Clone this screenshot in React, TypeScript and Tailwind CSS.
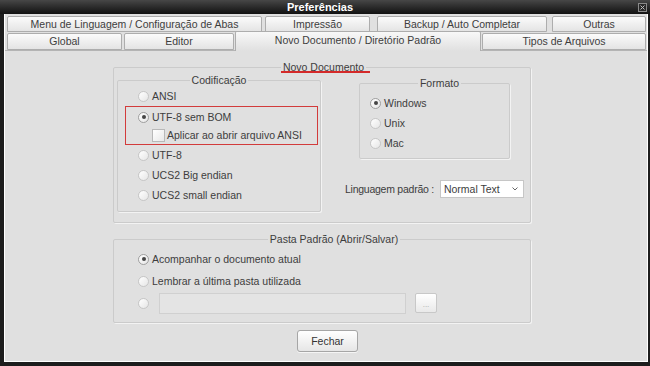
import React from 'react';

function Radio({ checked = false }: { checked?: boolean }) {
  return (
    <span
      className={`w-[11px] h-[11px] shrink-0 rounded-full border bg-gradient-to-br from-white to-[#e6e6e6] flex items-center justify-center ${
        checked ? 'border-[#9f9f9f]' : 'border-[#c6c6c6]'
      }`}
    >
      {checked && <span className="w-[4px] h-[4px] rounded-full bg-[#454545]" />}
    </span>
  );
}

function RadioRow({ label, checked = false, className = '' }: { label: string; checked?: boolean; className?: string }) {
  return (
    <div className={`h-[20px] flex items-center gap-[3px] ${className}`}>
      <Radio checked={checked} />
      <span>{label}</span>
    </div>
  );
}

function Tab({ label, className = '' }: { label: string; className?: string }) {
  return (
    <div
      className={`h-full flex items-center justify-center border border-[#adadad] rounded-t-[2px] bg-gradient-to-b from-[#fbfbfb] to-[#e4e4e4] ${className}`}
    >
      {label}
    </div>
  );
}

export default function App() {
  return (
    <div className="w-[650px] h-[366px] flex flex-col bg-[#1d1d1d] font-['Liberation_Sans',Arial,sans-serif] text-[10.5px] leading-[13px] text-[#3d3d3d]">
      {/* barra de título */}
      <div className="h-[14px] shrink-0 relative flex items-center justify-center pr-[10px] bg-gradient-to-b from-[#474747] to-[#121212]">
        <span className="text-white font-bold text-[11px]">Preferências</span>
        <span className="absolute right-[3px] top-[3px] w-[9px] h-[9px] border border-[#8a8a8a] bg-[#2a2a2a] flex items-center justify-center">
          <svg width="5" height="5" viewBox="0 0 5 5">
            <path d="M0.5 0.5 L4.5 4.5 M4.5 0.5 L0.5 4.5" stroke="#bdbdbd" strokeWidth="1" />
          </svg>
        </span>
      </div>

      <div className="flex-1 ml-[4px] mr-[2px] mb-[4px] flex flex-col bg-[#e0e0e0] border-l border-r border-b border-white pt-[2px]">
        {/* abas */}
        <div className="h-[16px] flex pl-[2px]">
          <Tab label="Menu de Linguagem / Configuração de Abas" className="w-[255px]" />
          <Tab label="Impressão" className="w-[105px] ml-[3px]" />
          <Tab label="Backup / Auto Completar" className="w-[170px] ml-[7px]" />
          <Tab label="Outras" className="w-[94px] ml-[5px]" />
        </div>
        <div className="h-[17px] mt-[1px] flex items-end pl-[2px]">
          <Tab label="Global" className="w-[115px]" />
          <Tab label="Editor" className="w-[110px] ml-[2px]" />
          <div className="relative z-10 w-[246px] h-[20px] -mb-[1px] ml-[1px] flex items-center justify-center pb-[2px] border border-b-0 border-[#adadad] rounded-t-[2px] bg-gradient-to-b from-[#f8f8f8] to-[#e0e0e0]">
            Novo Documento / Diretório Padrão
          </div>
          <Tab label="Tipos de Arquivos" className="w-[164px] ml-[1px]" />
        </div>

        {/* conteúdo */}
        <div className="flex-1 flex flex-col border-t border-[#b4b4b4] pt-[10px]">
          <fieldset className="ml-[108px] w-[418px] border border-[#cbcbcb] rounded-[2px] shadow-[1px_1px_0_#f3f3f3] pl-[3px] pb-[10px]">
            <legend className="relative mx-auto px-[2px] h-[13px]">
              Novo Documento
              <span className="absolute left-0 -right-[4px] bottom-[1px] h-[2px] bg-[#d42a2a]" />
            </legend>
            <div className="flex items-start">
              <fieldset className="w-[204px] border border-[#cbcbcb] rounded-[2px] shadow-[1px_1px_0_#f3f3f3] pb-[6px]">
                <legend className="mx-auto px-[2px] h-[13px]">Codificação</legend>
                <RadioRow label="ANSI" className="pl-[20px] -mt-[1px]" />
                <div className="ml-[7px] w-[193px] border border-[#d23b3b]">
                  <RadioRow label="UTF-8 sem BOM" checked className="pl-[12px] h-[19px]" />
                  <div className="h-[17px] flex items-center gap-[2px] pl-[26px]">
                    <span className="w-[13px] h-[13px] border border-[#b8b8b8] bg-gradient-to-br from-white to-[#e8e8e8]" />
                    <span>Aplicar ao abrir arquivo ANSI</span>
                  </div>
                </div>
                <RadioRow label="UTF-8" className="pl-[20px]" />
                <RadioRow label="UCS2 Big endian" className="pl-[20px]" />
                <RadioRow label="UCS2 small endian" className="pl-[20px]" />
              </fieldset>

              <div className="ml-[24px] flex flex-col">
                <fieldset className="ml-[14px] mt-[3px] w-[151px] border border-[#cbcbcb] rounded-[2px] shadow-[1px_1px_0_#f3f3f3] pl-[10px] pt-[3px] pb-[5px]">
                  <legend className="mx-auto px-[2px] h-[13px]">Formato</legend>
                  <RadioRow label="Windows" checked />
                  <RadioRow label="Unix" />
                  <RadioRow label="Mac" />
                </fieldset>
                <div className="mt-[21px] h-[18px] flex items-center">
                  <span className="tracking-[-0.25px]">Linguagem padrão :</span>
                  <div className="ml-[6px] w-[84px] h-[18px] flex items-center justify-between pl-[3px] pr-[5px] bg-white border border-[#c6c6c6]">
                    <span>Normal Text</span>
                    <svg width="6" height="4" viewBox="0 0 6 4">
                      <path d="M0.5 0.5 L3 3 L5.5 0.5" fill="none" stroke="#666" strokeWidth="1" />
                    </svg>
                  </div>
                </div>
              </div>
            </div>
          </fieldset>

          <fieldset className="ml-[108px] mt-[10px] w-[418px] border border-[#cbcbcb] rounded-[2px] shadow-[1px_1px_0_#f3f3f3] pl-[24px] pt-[2px] pb-[8px]">
            <legend className="mx-auto px-[2px] h-[13px]">Pasta Padrão (Abrir/Salvar)</legend>
            <RadioRow label="Acompanhar o documento atual" checked className="h-[22px]" />
            <RadioRow label="Lembrar a última pasta utilizada" className="h-[22px]" />
            <div className="h-[22px] flex items-center">
              <Radio />
              <div className="ml-[10px] w-[247px] h-[21px] bg-[#e4e4e4] border border-[#d0d0d0]" />
              <div className="ml-[9px] w-[22px] h-[20px] flex items-end justify-center pb-[3px] rounded-[2px] border border-[#c8c8c8] bg-gradient-to-b from-white to-[#e9e9e9] text-[#a8a8a8] text-[8px] leading-[8px]">
                ...
              </div>
            </div>
          </fieldset>

          <button className="self-center mt-[7px] ml-[3px] w-[61px] h-[22px] flex items-center justify-center rounded-[3px] border border-[#a6a6a6] bg-gradient-to-b from-white to-[#e6e6e6] shadow-[0_1px_0_#f5f5f5] text-[#333]">
            Fechar
          </button>
        </div>
      </div>
    </div>
  );
}
